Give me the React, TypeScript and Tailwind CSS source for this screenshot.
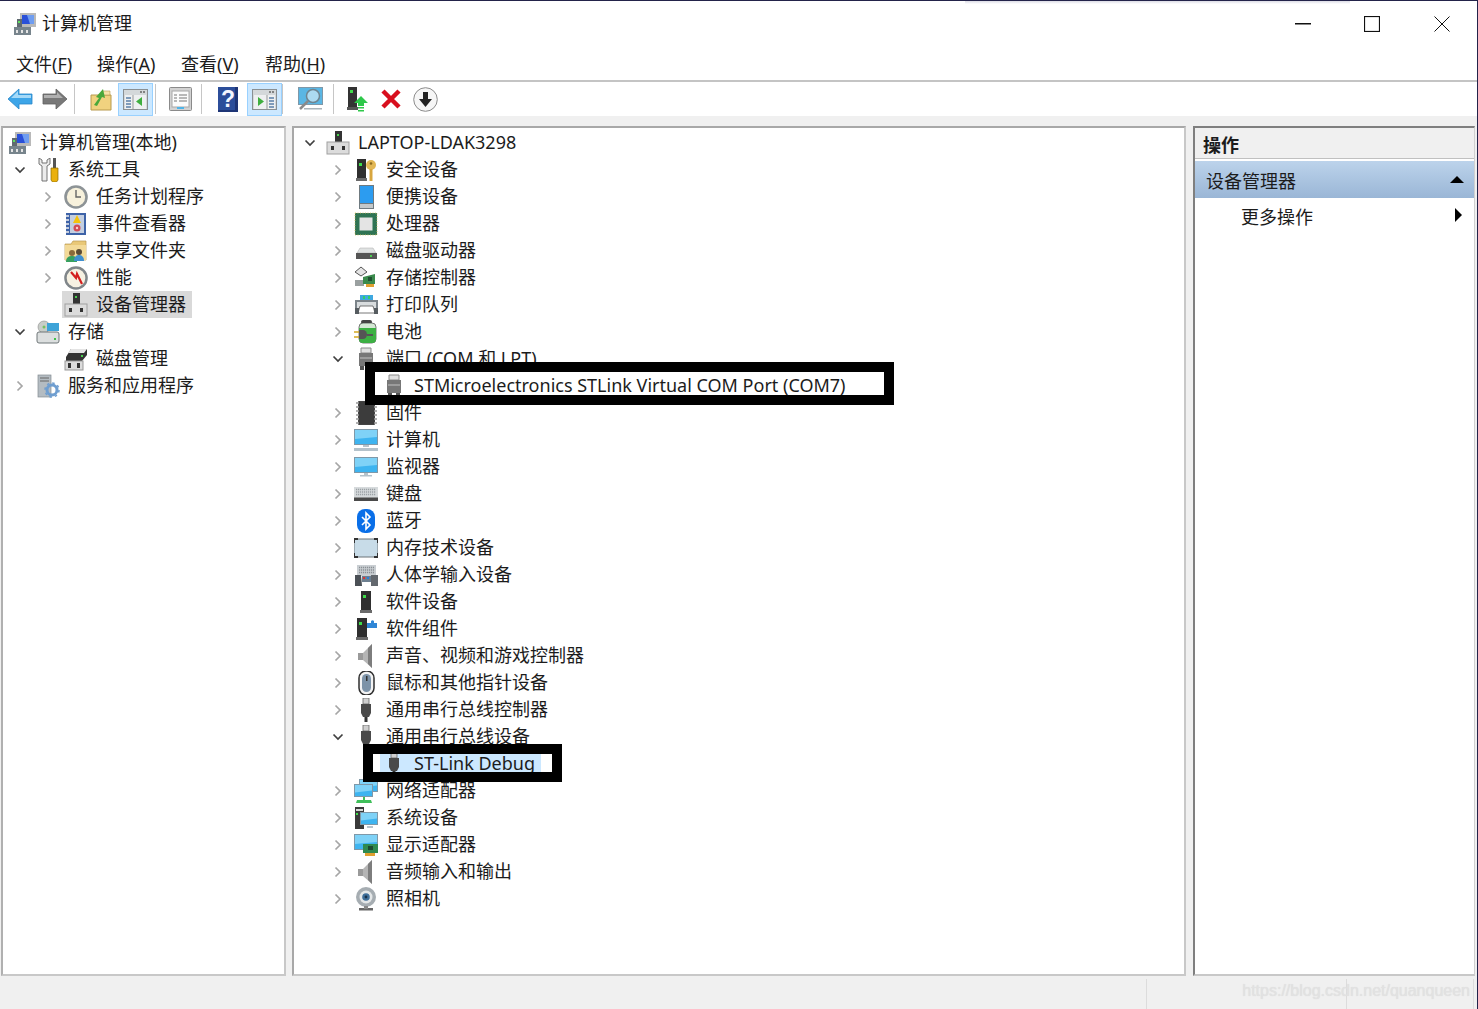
import type { ReactNode } from "react";

type IconName =
  | "mgmt" | "tools" | "clock" | "log" | "share" | "perf" | "dev" | "storage" | "disk" | "services"
  | "security" | "portable" | "cpu" | "drive" | "storctl" | "printer" | "battery" | "port" | "firmware"
  | "computer" | "monitor" | "keyboard" | "bluetooth" | "memory" | "hid" | "software" | "softcomp"
  | "speaker" | "mouse" | "usb" | "network" | "system" | "display" | "camera";

function Svg({ size = 24, children }: { size?: number; children: ReactNode }) {
  return (
    <svg width={size} height={size} viewBox="0 0 24 24" className="shrink-0">
      {children}
    </svg>
  );
}

const Tower = ({ x = 8, w = 8 }: { x?: number; w?: number }) => (
  <>
    <rect x={x} y="1" width={w} height="19" fill="#2f2f2f" />
    <rect x={x - 1} y="20" width={w + 2} height="3" fill="#6a6a6a" />
    <rect x={x + 2} y="5" width="3" height="3" fill="#3fdc4a" />
  </>
);

const Screen = ({ x = 1, y = 2, w = 22, h = 15 }: { x?: number; y?: number; w?: number; h?: number }) => (
  <>
    <rect x={x} y={y} width={w} height={h} fill="#7f98a8" />
    <rect x={x + 1} y={y + 1} width={w - 2} height={h - 2} fill="#3eb4f0" />
    <path d={`M${x + 1} ${y + 1}h${w - 2}v${(h - 2) / 2}l-${w - 2} 2z`} fill="#7fd2f7" />
  </>
);

function DevBox() {
  return (
    <>
      <rect x="9" y="0" width="7" height="11" fill="#333" />
      <rect x="11" y="3" width="2" height="2" fill="#49d04f" />
      <rect x="1" y="11" width="22" height="12" fill="#dcdcdc" stroke="#a0a0a0" />
      <rect x="5" y="15" width="3" height="4" fill="#333" />
      <rect x="16" y="15" width="3" height="4" fill="#333" />
    </>
  );
}

function Speaker() {
  return (
    <>
      <path d="M4 9h5v7H4z" fill="#9a9a9a" />
      <path d="M9 9l9-9v24l-9-8z" fill="#b5b5b5" />
      <path d="M14 4l4-4v24l-4-4z" fill="#7d7d7d" />
    </>
  );
}

function Icon({ name, size = 24 }: { name: IconName; size?: number }) {
  switch (name) {
    case "mgmt":
      return (
        <Svg size={size}>
          <rect x="7" y="1" width="16" height="14" fill="#b9b9b9" />
          <rect x="9" y="3" width="12" height="9" fill="#2a50d8" />
          <path d="M14 3h7v9h-4z" fill="#6f9df0" />
          <rect x="1" y="15" width="17" height="8" fill="#77848c" />
          <path d="M3 18h2v3H3zM8 18h2v3H8zM13 18h2v3h-2z" fill="#e4e4e4" />
          <rect x="4" y="7" width="5" height="8" fill="#606a70" />
          <rect x="5" y="9" width="2" height="2" fill="#5fe060" />
        </Svg>
      );
    case "tools":
      return (
        <Svg size={size}>
          <path d="M3 0v6l3 2v15h5V8l3-2V0l-3 2v3H6V2z" fill="#ececec" stroke="#666" strokeWidth="0.900" />
          <rect x="17" y="0" width="3" height="10" fill="#555" />
          <path d="M15 10h7v12l-1.500 2h-4L15 22z" fill="#eab00c" stroke="#8a6a05" strokeWidth="0.700" />
        </Svg>
      );
    case "clock":
      return (
        <Svg size={size}>
          <circle cx="12" cy="12" r="11.800" fill="#8d9396" />
          <circle cx="12" cy="12" r="9.200" fill="#f7f1dc" />
          <path d="M12 5v7h5" fill="none" stroke="#666" strokeWidth="1.400" />
        </Svg>
      );
    case "log":
      return (
        <Svg size={size}>
          <rect x="2" y="1" width="20" height="22" fill="#3e63a8" />
          <rect x="6" y="3" width="14" height="18" fill="#c4cfe0" />
          <path d="M2 4h3M2 8h3M2 12h3M2 16h3M2 20h3" stroke="#eee" strokeWidth="1.300" />
          <path d="M13 3l4 8H9z" fill="#f4c20d" />
          <circle cx="13" cy="16" r="3.500" fill="#d24a55" />
          <circle cx="13" cy="16" r="1.200" fill="#f8d0d0" />
        </Svg>
      );
    case "share":
      return (
        <Svg size={size}>
          <path d="M1 5h6l2-3h13v19H1z" fill="#e9c877" stroke="#b99a50" strokeWidth="0.700" />
          <rect x="1" y="6" width="21" height="15" fill="#f3da98" />
          <circle cx="8" cy="14" r="3" fill="#8a6a3a" />
          <circle cx="15" cy="13" r="3" fill="#5a4a35" />
          <path d="M2 23c0-5 3-6 6-6s5 1 5 6z" fill="#37a060" />
          <path d="M10 22c0-5 3-6 5-6s5 1 5 6z" fill="#3f8fcf" />
        </Svg>
      );
    case "perf":
      return (
        <Svg size={size}>
          <circle cx="12" cy="12" r="11.800" fill="#80868a" />
          <circle cx="12" cy="12" r="9.300" fill="#f6f1e2" />
          <path d="M7 6l5 6 1-4 5 10" fill="none" stroke="#d31f1f" strokeWidth="2.200" />
        </Svg>
      );
    case "dev":
      return (
        <Svg size={size}>
          <DevBox />
        </Svg>
      );
    case "storage":
      return (
        <Svg size={size}>
          <circle cx="8" cy="7" r="6" fill="#c8cdc8" stroke="#8a8a8a" strokeWidth="0.600" />
          <circle cx="8" cy="7" r="1.500" fill="#76c060" />
          <rect x="11" y="3" width="12" height="8" fill="#3da3d8" />
          <rect x="1" y="12" width="22" height="11" rx="2" fill="#dcdfdf" stroke="#6f7678" />
          <rect x="18" y="18" width="2" height="2" fill="#3fc24a" />
        </Svg>
      );
    case "disk":
      return (
        <Svg size={size}>
          <path d="M2 10L7 2h16v6L18 14H2z" fill="#333" />
          <path d="M7 2h16l-3 4H4z" fill="#e4e4e4" />
          <rect x="17" y="8" width="2" height="2" fill="#49d04f" />
          <rect x="1" y="14" width="18" height="9" fill="#dcdcdc" stroke="#999" />
          <rect x="4" y="16" width="3" height="5" fill="#333" />
          <rect x="13" y="16" width="3" height="5" fill="#333" />
        </Svg>
      );
    case "services":
      return (
        <Svg size={size}>
          <rect x="2" y="1" width="13" height="22" fill="#b4bcc2" stroke="#848c92" strokeWidth="0.700" />
          <path d="M4 4h9M4 7h9" stroke="#666" strokeWidth="1.200" />
          <circle cx="16" cy="16" r="5" fill="none" stroke="#6f9ed0" strokeWidth="3" />
          <circle cx="16" cy="16" r="7" fill="none" stroke="#6f9ed0" strokeWidth="1.500" strokeDasharray="2.500 3" />
        </Svg>
      );
    case "security":
      return (
        <Svg size={size}>
          <Tower x={3} w={9} />
          <circle cx="17" cy="7" r="5" fill="#e2b755" />
          <circle cx="17" cy="5.500" r="1.300" fill="#8c6a20" />
          <path d="M15.500 11h3v12h-3z" fill="#d8a63f" />
        </Svg>
      );
    case "portable":
      return (
        <Svg size={size}>
          <rect x="5" y="0" width="15" height="24" fill="#6f7a80" />
          <rect x="6" y="1" width="13" height="17" fill="#2c9cf0" />
          <rect x="6" y="19" width="13" height="4" fill="#c3c8ca" />
        </Svg>
      );
    case "cpu":
      return (
        <Svg size={size}>
          <rect x="1" y="1" width="22" height="22" fill="#2f7454" />
          <rect x="1" y="1" width="22" height="22" fill="none" stroke="#d9c060" strokeWidth="0.800" strokeDasharray="1 1.500" />
          <rect x="5.500" y="5.500" width="13" height="13" fill="#e4e4e4" />
        </Svg>
      );
    case "drive":
      return (
        <Svg size={size}>
          <path d="M3 14l3-5h13l3 5z" fill="#dfe2e2" stroke="#aaa" strokeWidth="0.500" />
          <rect x="2" y="14" width="21" height="6" fill="#555" />
          <rect x="16" y="16" width="2" height="2" fill="#4ad04f" />
        </Svg>
      );
    case "storctl":
      return (
        <Svg size={size}>
          <path d="M1 6l6-5 6 5-6 4z" fill="#e4e4e4" stroke="#555" />
          <path d="M1 14h9v6H1z" fill="#9aa0a0" />
          <path d="M9 11l12-3v10H9z" fill="#3a8a4c" />
          <rect x="14" y="11" width="4" height="4" fill="#205030" />
          <rect x="12" y="18" width="8" height="3" fill="#e0a030" />
        </Svg>
      );
    case "printer":
      return (
        <Svg size={size}>
          <rect x="6" y="2" width="13" height="6" fill="#3fa8e0" />
          <path d="M9 3h2v3H9zM14 3h2v3h-2z" fill="#2ed06a" />
          <rect x="1" y="7" width="23" height="8" fill="#7b8389" />
          <rect x="3" y="9" width="19" height="6" fill="#d8dcde" />
          <path d="M6 13h13l2 7H4z" fill="#fff" stroke="#555" strokeWidth="0.800" />
          <rect x="1" y="15" width="4" height="6" fill="#565c60" />
          <rect x="20" y="15" width="4" height="6" fill="#565c60" />
        </Svg>
      );
    case "battery":
      return (
        <Svg size={size}>
          <rect x="7" y="0" width="11" height="4" rx="2" fill="#444" />
          <rect x="5" y="3" width="17" height="20" rx="4" fill="#d4e8d4" stroke="#444" strokeWidth="0.700" />
          <path d="M5 8h17v11a4 4 0 0 1-4 4H9a4 4 0 0 1-4-4z" fill="#3cb043" />
          <path d="M0 12h6M0 17h6" stroke="#d4a820" strokeWidth="1.500" />
          <path d="M5 10h4a4 4.500 0 0 1 0 9H5z" fill="#555" />
          <path d="M13 15h6" stroke="#555" strokeWidth="2" />
        </Svg>
      );
    case "port":
      return (
        <Svg size={size}>
          <path d="M7 1h10v5H7z" fill="#e0e0e0" stroke="#8a8a8a" />
          <path d="M5 6h14v13H5z" fill="#777" />
          <path d="M6 11h12" stroke="#a8a8a8" strokeWidth="1.500" />
          <path d="M6 19h4v4H6zM14 19h4v4h-4z" fill="#555" />
        </Svg>
      );
    case "firmware":
      return (
        <Svg size={size}>
          <rect x="4" y="0" width="17" height="24" rx="1" fill="#444" />
          <path d="M2 2h21M2 6h21M2 10h21M2 14h21M2 18h21M2 22h21" stroke="#999" strokeWidth="1.300" strokeDasharray="3 15" />
          <rect x="5" y="1" width="15" height="22" fill="#3c3c3c" />
        </Svg>
      );
    case "computer":
      return (
        <Svg size={size}>
          <Screen x={0} y={1} w={24} h={16} />
          <rect x="9" y="17" width="6" height="2" fill="#b7c4cc" />
          <rect x="0" y="20" width="24" height="3" fill="#b4c2cb" />
        </Svg>
      );
    case "monitor":
      return (
        <Svg size={size}>
          <Screen x={0} y={2} w={24} h={16} />
          <rect x="10" y="18" width="4" height="2" fill="#b7c4cc" />
          <rect x="6" y="20" width="12" height="1.500" fill="#b4c2cb" />
        </Svg>
      );
    case "keyboard":
      return (
        <Svg size={size}>
          <rect x="0" y="5" width="24" height="14" fill="#d6dadc" />
          <path d="M2 7.500h20M2 10h20M2 12.500h20" stroke="#9ba1a5" strokeWidth="1.400" strokeDasharray="1.200 0.800" />
          <rect x="0" y="15.500" width="24" height="3.500" fill="#4a4a4a" />
        </Svg>
      );
    case "bluetooth":
      return (
        <Svg size={size}>
          <rect x="3" y="0" width="18" height="24" rx="8" fill="#0a6fe8" />
          <path d="M8 8l8 8-4 4V4l4 4-8 8" fill="none" stroke="#fff" strokeWidth="1.600" />
        </Svg>
      );
    case "memory":
      return (
        <Svg size={size}>
          <rect x="0" y="3" width="24" height="18" rx="2" fill="#c8dce8" stroke="#6c7478" />
          <path d="M0 7V3h4M20 3h4v4M0 17v4h4M20 21h4v-4" fill="none" stroke="#333" strokeWidth="2" />
        </Svg>
      );
    case "hid":
      return (
        <Svg size={size}>
          <rect x="3" y="2" width="19" height="11" fill="#c9ced2" />
          <path d="M5 4.500h15M5 7h15M5 9.500h15" stroke="#8a9095" strokeWidth="1.300" strokeDasharray="1.200 0.800" />
          <path d="M1 12h6l1 11H1z" fill="#4b5056" />
          <path d="M17 12h7v11h-7z" fill="#63686e" />
          <path d="M8 13h9v6H8z" fill="#6d7f90" />
          <rect x="9" y="14" width="2" height="2" fill="#d33" />
          <rect x="13" y="14" width="2" height="2" fill="#2c7fd8" />
        </Svg>
      );
    case "software":
      return (
        <Svg size={size}>
          <Tower x={7} w={10} />
        </Svg>
      );
    case "softcomp":
      return (
        <Svg size={size}>
          <Tower x={3} w={10} />
          <path d="M13 6h4V4a2 2 0 0 1 3 0v2h3v5h-10z" fill="#2f86d6" />
        </Svg>
      );
    case "speaker":
      return (
        <Svg size={size}>
          <Speaker />
        </Svg>
      );
    case "mouse":
      return (
        <Svg size={size}>
          <rect x="5" y="0" width="15" height="24" rx="7" fill="#f3f3f3" stroke="#2f2f2f" strokeWidth="1.500" />
          <rect x="8" y="3" width="9" height="18" rx="4.500" fill="#7d93a8" />
          <rect x="12" y="5" width="1.500" height="5" fill="#333" />
        </Svg>
      );
    case "usb":
      return (
        <Svg size={size}>
          <rect x="9" y="0" width="6" height="6" fill="#cfcfcf" stroke="#666" strokeWidth="0.800" />
          <path d="M7 6h10v9l-2 4h-6l-2-4z" fill="#4a4a4a" />
          <rect x="10.500" y="19" width="3" height="5" fill="#333" />
        </Svg>
      );
    case "network":
      return (
        <Svg size={size}>
          <Screen x={5} y={0} w={19} h={13} />
          <Screen x={0} y={5} w={19} h={13} />
          <path d="M9 18h2v3h-2z" fill="#3fbf5a" />
          <path d="M3 21h14l1 3H2z" fill="#3fbf5a" />
        </Svg>
      );
    case "system":
      return (
        <Svg size={size}>
          <rect x="1" y="1" width="9" height="22" fill="#3a3a3a" />
          <path d="M2 3h7v2H2z" fill="#d8d8d8" />
          <rect x="2" y="7" width="2" height="2" fill="#3fdc4a" />
          <Screen x={6} y={6} w={18} h={13} />
          <rect x="13" y="20" width="6" height="2" fill="#b7c4cc" />
        </Svg>
      );
    case "display":
      return (
        <Svg size={size}>
          <Screen x={0} y={1} w={24} h={16} />
          <rect x="9" y="11" width="15" height="9" fill="#2f8a50" />
          <rect x="14" y="13" width="5" height="4" fill="#1c4a30" />
          <rect x="11" y="20" width="10" height="3" fill="#e0a030" />
        </Svg>
      );
    case "camera":
      return (
        <Svg size={size}>
          <circle cx="12" cy="10" r="10" fill="#a6adb2" />
          <circle cx="12" cy="10" r="6.500" fill="#e4e7e8" />
          <circle cx="12" cy="10" r="3.800" fill="#3f6f9a" />
          <circle cx="12" cy="10" r="1.400" fill="#18324a" />
          <rect x="5" y="21" width="14" height="2.500" fill="#666" />
          <rect x="10" y="19" width="4" height="3" fill="#888" />
        </Svg>
      );
  }
}

function Chevron({ state }: { state?: "open" | "closed" }) {
  if (!state) return null;
  return state === "open" ? (
    <svg width="12" height="12" viewBox="0 0 12 12">
      <path d="M1.500 3.500L6 8l4.500-4.500" fill="none" stroke="#404040" strokeWidth="1.700" />
    </svg>
  ) : (
    <svg width="12" height="12" viewBox="0 0 12 12">
      <path d="M3.500 1.500L8 6l-4.500 4.500" fill="none" stroke="#a6a6a6" strokeWidth="1.700" />
    </svg>
  );
}

type Node = {
  label: string;
  icon: IconName;
  level: 0 | 1 | 2;
  state?: "open" | "closed";
  highlight?: "gray" | "blue";
  noToggle?: boolean;
  mark?: "port" | "link";
};

const indent = ["pl-0", "pl-7", "pl-14"];
const highlightBg = { gray: "bg-[#d9d9d9]", blue: "bg-[#cce8ff]" };

function TreeRow({ node }: { node: Node }) {
  return (
    <div className={`relative flex h-[27px] items-center whitespace-nowrap ${indent[node.level]}`}>
      {!node.noToggle && (
        <span className="flex w-7 shrink-0 justify-center">
          <Chevron state={node.state} />
        </span>
      )}
      <span className={`flex h-[27px] items-center ${node.highlight ? highlightBg[node.highlight] : ""}`}>
        <span className="flex w-7 shrink-0 justify-center">
          <Icon name={node.icon} />
        </span>
        <span className="pl-1.5 pr-1.5">{node.label}</span>
      </span>
      {node.mark === "port" && (
        <span className="pointer-events-none absolute left-[69px] top-[-10px] z-10 h-[43px] w-[529px] border-[10px] border-black" />
      )}
      {node.mark === "link" && (
        <span className="pointer-events-none absolute left-[67px] top-[-6px] z-10 h-[38px] w-[199px] border-[10px] border-black" />
      )}
    </div>
  );
}

const leftTree: Node[] = [
  { label: "计算机管理(本地)", icon: "mgmt", level: 0, noToggle: true },
  { label: "系统工具", icon: "tools", level: 0, state: "open" },
  { label: "任务计划程序", icon: "clock", level: 1, state: "closed" },
  { label: "事件查看器", icon: "log", level: 1, state: "closed" },
  { label: "共享文件夹", icon: "share", level: 1, state: "closed" },
  { label: "性能", icon: "perf", level: 1, state: "closed" },
  { label: "设备管理器", icon: "dev", level: 1, highlight: "gray" },
  { label: "存储", icon: "storage", level: 0, state: "open" },
  { label: "磁盘管理", icon: "disk", level: 1 },
  { label: "服务和应用程序", icon: "services", level: 0, state: "closed" },
];

const deviceTree: Node[] = [
  { label: "LAPTOP-LDAK3298", icon: "dev", level: 0, state: "open" },
  { label: "安全设备", icon: "security", level: 1, state: "closed" },
  { label: "便携设备", icon: "portable", level: 1, state: "closed" },
  { label: "处理器", icon: "cpu", level: 1, state: "closed" },
  { label: "磁盘驱动器", icon: "drive", level: 1, state: "closed" },
  { label: "存储控制器", icon: "storctl", level: 1, state: "closed" },
  { label: "打印队列", icon: "printer", level: 1, state: "closed" },
  { label: "电池", icon: "battery", level: 1, state: "closed" },
  { label: "端口 (COM 和 LPT)", icon: "port", level: 1, state: "open" },
  { label: "STMicroelectronics STLink Virtual COM Port (COM7)", icon: "port", level: 2, mark: "port" },
  { label: "固件", icon: "firmware", level: 1, state: "closed" },
  { label: "计算机", icon: "computer", level: 1, state: "closed" },
  { label: "监视器", icon: "monitor", level: 1, state: "closed" },
  { label: "键盘", icon: "keyboard", level: 1, state: "closed" },
  { label: "蓝牙", icon: "bluetooth", level: 1, state: "closed" },
  { label: "内存技术设备", icon: "memory", level: 1, state: "closed" },
  { label: "人体学输入设备", icon: "hid", level: 1, state: "closed" },
  { label: "软件设备", icon: "software", level: 1, state: "closed" },
  { label: "软件组件", icon: "softcomp", level: 1, state: "closed" },
  { label: "声音、视频和游戏控制器", icon: "speaker", level: 1, state: "closed" },
  { label: "鼠标和其他指针设备", icon: "mouse", level: 1, state: "closed" },
  { label: "通用串行总线控制器", icon: "usb", level: 1, state: "closed" },
  { label: "通用串行总线设备", icon: "usb", level: 1, state: "open" },
  { label: "ST-Link Debug", icon: "usb", level: 2, highlight: "blue", mark: "link" },
  { label: "网络适配器", icon: "network", level: 1, state: "closed" },
  { label: "系统设备", icon: "system", level: 1, state: "closed" },
  { label: "显示适配器", icon: "display", level: 1, state: "closed" },
  { label: "音频输入和输出", icon: "speaker", level: 1, state: "closed" },
  { label: "照相机", icon: "camera", level: 1, state: "closed" },
];

function ToolBtn({ active, className = "w-[34px]", children }: { active?: boolean; className?: string; children: ReactNode }) {
  return (
    <span
      className={`flex h-[33px] items-center justify-center border ${className} ${
        active ? "border-[#99d1ff] bg-[#cce8ff]" : "border-transparent"
      }`}
    >
      {children}
    </span>
  );
}

const Sep = ({ className }: { className: string }) => <span className={`h-[30px] w-px bg-[#c6c6c6] ${className}`} />;

function PaneIcon({ side }: { side: "left" | "right" }) {
  return (
    <svg width="25" height="21" viewBox="0 0 25 21">
      <rect x="0.500" y="0.500" width="24" height="20" fill="#d4d8da" stroke="#8a8f92" />
      <path d="M17 3h2M20 3h2" stroke="#666" strokeWidth="1.500" />
      <rect x="2" y="6" width="21" height="14" fill="#eef0f1" />
      {side === "left" ? (
        <>
          <path d="M3 9h5M3 12h5M3 15h5M3 18h5" stroke="#5b7fa8" strokeWidth="1.400" />
          <path d="M10 6v14" stroke="#999" />
          <path d="M19 8v9l-6-4.500z" fill="#3fae3f" />
        </>
      ) : (
        <>
          <path d="M17 9h5M17 12h5M17 15h5M17 18h5" stroke="#5b7fa8" strokeWidth="1.400" />
          <path d="M15 6v14" stroke="#999" />
          <path d="M6 8v9l6-4.500z" fill="#3fae3f" />
        </>
      )}
    </svg>
  );
}

function Toolbar() {
  return (
    <div className="flex h-[34px] items-center bg-white pl-[3px]">
      <ToolBtn>
        <svg width="26" height="22" viewBox="0 0 26 22">
          <path d="M1 11L12 1v5h13v10H12v5z" fill="#3da5e8" stroke="#2a86c8" strokeWidth="0.800" />
          <path d="M4 10l7-7v4h13v3z" fill="#a4d9f8" />
        </svg>
      </ToolBtn>
      <ToolBtn className="w-[35px]">
        <svg width="26" height="22" viewBox="0 0 26 22">
          <path d="M25 11L14 1v5H1v10h13v5z" fill="#787878" stroke="#606060" strokeWidth="0.800" />
          <path d="M2 7h13V4l6 6H2z" fill="#b0b0b0" />
        </svg>
      </ToolBtn>
      <Sep className="ml-0.5 mr-[9px]" />
      <ToolBtn>
        <svg width="22" height="23" viewBox="0 0 22 23">
          <path d="M1 7h20v15H1z" fill="#f1d27f" stroke="#b89a4e" />
          <path d="M12 3h8v4h-8z" fill="#f7e3a8" stroke="#b89a4e" strokeWidth="0.600" />
          <path d="M4 17l5-7-3-1 7-8 2 9-3-1-5 9z" fill="#4aa83a" />
        </svg>
      </ToolBtn>
      <ToolBtn active className="w-[35px]">
        <PaneIcon side="left" />
      </ToolBtn>
      <Sep className="ml-0.5 mr-[7px]" />
      <ToolBtn>
        <svg width="23" height="24" viewBox="0 0 23 24">
          <rect x="0.500" y="0.500" width="22" height="23" rx="1" fill="#d2d2d2" stroke="#8a8a8a" />
          <rect x="3" y="4" width="17" height="16" fill="#fbfbfb" stroke="#a8a8a8" />
          <path d="M5 8h3M10 8h8M5 11h3M10 11h8M5 14h3M10 14h8" stroke="#777" strokeWidth="1.200" />
          <rect x="8" y="20" width="7" height="2" fill="#4fb4e8" />
        </svg>
      </ToolBtn>
      <Sep className="ml-1 mr-[9px]" />
      <ToolBtn>
        <svg width="20" height="25" viewBox="0 0 20 25">
          <rect x="0" y="0" width="20" height="25" fill="#2c4e9a" />
          <path d="M17 0h3v25H0v-2h17z" fill="#1e3576" />
          <text x="10" y="20" textAnchor="middle" fontSize="23" fontWeight="700" fontFamily="Liberation Sans" fill="#f4f6ff">?</text>
        </svg>
      </ToolBtn>
      <ToolBtn active className="ml-0.5 w-[35px]">
        <PaneIcon side="right" />
      </ToolBtn>
      <Sep className="mr-2.5" />
      <ToolBtn>
        <svg width="25" height="24" viewBox="0 0 25 24">
          <rect x="0.500" y="0.500" width="24" height="17" fill="#5ab6e4" stroke="#7f98a8" />
          <circle cx="15" cy="9" r="6.500" fill="#cfeaf6" fillOpacity="0.700" stroke="#6f8490" strokeWidth="1.500" />
          <path d="M10 14L2 22" stroke="#8a8a8a" strokeWidth="2.500" />
          <rect x="6" y="21" width="18" height="1.500" fill="#aab4ba" />
        </svg>
      </ToolBtn>
      <Sep className="mx-[6px]" />
      <ToolBtn>
        <svg width="21" height="25" viewBox="0 0 21 25">
          <rect x="1" y="0" width="9" height="20" fill="#333" />
          <rect x="3" y="3" width="3" height="3" fill="#3fdc4a" />
          <rect x="0" y="20" width="11" height="3" fill="#555" />
          <path d="M14 9l7 7h-4v3h-6v-3H7z" fill="#2ec84a" />
          <path d="M11 20h6v1.500h-6zM11 23h6v1.500h-6z" fill="#2ec84a" />
        </svg>
      </ToolBtn>
      <ToolBtn>
        <svg width="20" height="20" viewBox="0 0 20 20">
          <path d="M2 2l16 16M18 2L2 18" stroke="#d80f1e" strokeWidth="4.500" />
        </svg>
      </ToolBtn>
      <ToolBtn>
        <svg width="25" height="25" viewBox="0 0 25 25">
          <circle cx="12.500" cy="12.500" r="11.800" fill="#f6f6f6" stroke="#8c8c8c" />
          <path d="M10 5h5v7h4l-6.500 8L6 12h4z" fill="#222" />
        </svg>
      </ToolBtn>
    </div>
  );
}

function MenuItem({ name, hot, className }: { name: string; hot: string; className: string }) {
  return (
    <span className={className}>
      {name}(<span className="underline underline-offset-2">{hot}</span>)
    </span>
  );
}

export default function App() {
  return (
    <div className="relative flex h-[1009px] w-[1478px] flex-col overflow-hidden border-r border-t border-[#23234a] bg-white font-['Noto_Sans','Noto_Sans_CJK_SC',sans-serif] text-[18px] leading-[27px] text-[#1c1c1c]">
      <div className="pointer-events-none absolute left-[965px] top-0 h-[3px] w-[385px] bg-gradient-to-b from-[#dcdce6] to-white" />

      <div className="flex h-[45px] items-center pl-[13px]">
        <Icon name="mgmt" size={24} />
        <span className="ml-[5px]">计算机管理</span>
        <div className="ml-auto flex items-center">
          <svg width="16" height="2" className="mr-[53px]"><rect width="16" height="1.500" fill="#111" /></svg>
          <svg width="16" height="16" className="mr-[54px]"><rect x="0.500" y="0.500" width="15" height="15" fill="none" stroke="#111" strokeWidth="1.200" /></svg>
          <svg width="16" height="16" className="mr-[27px]"><path d="M0.500 0.500l15 15M15.500 0.500l-15 15" fill="none" stroke="#111" /></svg>
        </div>
      </div>

      <div className="flex h-[34px] items-center pl-4 pt-0.5">
        <MenuItem name="文件" hot="F" className="w-[81px]" />
        <MenuItem name="操作" hot="A" className="w-[84px]" />
        <MenuItem name="查看" hot="V" className="w-[84px]" />
        <MenuItem name="帮助" hot="H" className="w-[84px]" />
      </div>

      <div className="h-0.5 bg-[#c4c4c4]" />
      <Toolbar />

      <div className="flex min-h-0 flex-1 flex-col bg-[#f0f0f0]">
        <div className="flex min-h-0 flex-1 pl-px pr-0.5 pt-[10px]">
          <aside className="w-[285px] border-2 border-[#a8a8a8] border-b-[#c8c8c8] border-r-[#c8c8c8] border-l-[#b0b0b0] bg-white pl-[3px] pt-px">
            {leftTree.map((node) => (
              <TreeRow key={node.label} node={node} />
            ))}
          </aside>

          <main className="ml-[6px] w-[894px] border-2 border-[#a8a8a8] border-b-[#c8c8c8] border-r-[#c8c8c8] bg-white pl-0.5 pt-px">
            {deviceTree.map((node) => (
              <TreeRow key={node.label} node={node} />
            ))}
          </main>

          <section className="ml-[7px] flex-1 border-b-2 border-l-2 border-r border-t-2 border-[#7f7f7f] border-b-[#c8c8c8] border-r-[#d0d0d0] bg-white">
            <div className="flex h-[31px] items-center border-b border-[#c0c0c0] bg-[#f0f0f0] pl-2 pt-1 font-bold">操作</div>
            <div className="mt-0.5 flex h-[37px] items-center justify-between bg-gradient-to-b from-[#bcd3eb] to-[#9ab6d6] pl-[11px] pr-[10px]">
              <span className="pt-1">设备管理器</span>
              <span className="h-0 w-0 border-x-[7px] border-b-[7px] border-x-transparent border-b-black" />
            </div>
            <div className="flex h-[37px] items-center justify-between pl-[46px] pr-[12px]">
              <span className="pt-0.5">更多操作</span>
              <span className="mb-1 h-0 w-0 border-y-[7px] border-l-[7px] border-y-transparent border-l-black" />
            </div>
          </section>
        </div>

        <div className="flex h-[33px] items-stretch justify-end pt-[3px] font-['Liberation_Sans',sans-serif] text-[16px]">
          <span className="w-[200px] border-l border-[#dcdcdc]" />
          <span className="relative w-[128px] border-l border-r border-[#dcdcdc]">
            <span className="absolute bottom-[10px] right-[3px] whitespace-nowrap leading-none text-[#e2e2e2] [text-shadow:0_0_1px_#d8d8d8]">
              https://blog.csdn.net/quanqueen
            </span>
          </span>
          <span className="w-[3px]" />
        </div>
      </div>
    </div>
  );
}
